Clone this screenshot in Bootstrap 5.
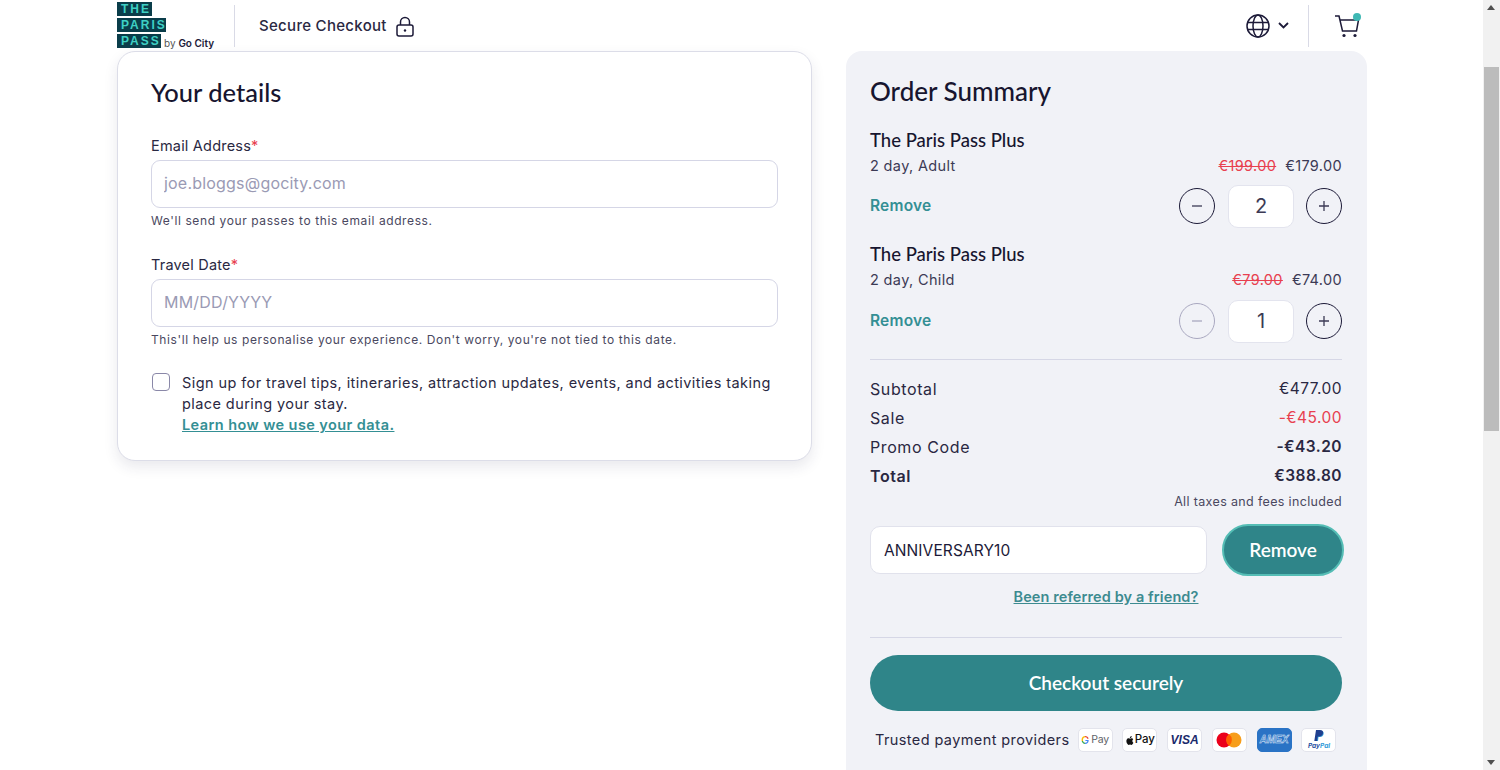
<!DOCTYPE html>
<html lang="en">
<head>
<meta charset="utf-8">
<title>Secure Checkout</title>
<link rel="stylesheet" href="https://cdn.jsdelivr.net/npm/bootstrap@5.3.0/dist/css/bootstrap.min.css">
<style>
html,body{height:770px;overflow:hidden}
body{font-family:Inter,"Liberation Sans",sans-serif;color:#1c1a38;background:#fff;font-size:15px}
.page-shell{height:770px}
.page-main{width:1483px;padding:0 116px 0 117px;overflow:hidden}
.rail{width:17px;background:#f1f1f1;height:770px;padding-top:67px;position:relative}
.rail-thumb{height:364px;width:15px;margin-left:1px;background:#bcbcbc}
.rail-arrow{position:absolute;left:4px;width:0;height:0;border-left:4.5px solid transparent;border-right:4.5px solid transparent}
.rail-up{top:5px;border-bottom:5px solid #505050}
.rail-down{bottom:5px;border-top:5px solid #505050}
.top-bar{height:51px}
.logo-box{width:98px;height:47px;margin-top:2px;position:relative;flex:none}
.logo-line{display:block;height:14px;margin-bottom:2px;line-height:14px;font-weight:700;font-size:12px;letter-spacing:2px;padding-left:4px;color:#3ed0c4;background:#0a3d4a;font-family:"Liberation Sans",sans-serif;white-space:nowrap;overflow:hidden}
.logo-the{width:35px}.logo-paris{width:49px}.logo-pass{width:44px}
.logo-by{position:absolute;left:47px;bottom:0;font-size:10px;line-height:12px;white-space:nowrap;color:#555}
.logo-by b{color:#1c1a38;font-weight:600}
.v-sep{width:1px;height:42px;background:#d9dae6;margin-top:5px}
.sep-logo{margin-left:19px}
.sep-lang{margin-left:19px}
.secure-text{font-size:15px;font-weight:500;letter-spacing:.3px;color:#2a2842;padding-top:2px}
.cart-wrap{padding-left:25px;padding-right:5px}
.content-row{gap:34px;align-items:flex-start}
.details-card{width:696px;height:410px;border:1px solid #dcdde8;border-radius:18px;box-shadow:0 6px 14px rgba(40,40,80,.1);padding:21px 33px;background:#fff}
.head-font{font-family:Lato,"Open Sans",sans-serif;font-weight:500;font-size:26px;line-height:38px;color:#17152f;margin:0}
.details-title{font-size:25.5px;margin-bottom:25px}
.summary-title{margin-bottom:18px}
.field-label{font-size:14.5px;line-height:20px;letter-spacing:.2px;color:#2a2842;margin:0 0 4px}
.req{color:#e8404f}
.field-input{height:48px;border:1px solid #d5d6e6;border-radius:9px;font-size:16px;padding:0 12px 2px;color:#1c1a38;letter-spacing:.2px}
.field-input::placeholder{color:#9a9ab4}
.field-help{font-size:12px;line-height:16px;letter-spacing:.6px;color:#4a4860;margin-top:5px}
.help-gap{margin-bottom:26px}
.check-row{gap:12px;margin-top:24px}
.form-check-input.tick{width:18px;height:18px;margin:1px 0 0 1px;border:1.5px solid #8a88a8;border-radius:4px;flex:none}
.check-text{font-size:14.5px;line-height:21px;letter-spacing:.42px;color:#2a2842}
.teal-link{color:#348f94;font-weight:600;text-decoration:underline}
.summary{width:521px;height:800px;background:#f1f2f7;border-radius:16px 16px 0 0;padding:21px 25px 0 24px}
.item-title{font-family:Lato,"Open Sans",sans-serif;font-weight:500;font-size:18.5px;line-height:24px;color:#17152f}
.item-sub{font-size:14.5px;line-height:20px;letter-spacing:.35px;color:#3c3a55;width:472px;margin-top:4px}
.old-price{color:#e8404f;text-decoration:line-through;margin-right:9px}
.remove-link{color:#348f94;font-weight:600;font-size:15.5px;letter-spacing:.2px;text-decoration:none}
.round-btn{width:36px;height:36px;border-radius:50%;border:1.6px solid #1c1a38;background:transparent;padding:0;display:flex;align-items:center;justify-content:center;color:#3c3a55}
.round-off{border-color:#a9a8c0;color:#a9a8c0}
.qty-box{width:66px;height:43px;background:#fff;border:1px solid #e3e4ee;border-radius:10px;margin:0 12px 0 13px;font-size:20px;color:#3c3a55;display:flex;align-items:center;justify-content:center}
.item-block{height:114px}
.item-block-last{height:117px}
.qty-row{height:42px;width:472px;margin-top:9px}
.qty-row-last{margin-top:10px}
.rule{height:1px;background:#d6d7e6;width:472px}
.rule-items{margin-bottom:15px}
.rule-promo{margin-top:30px;margin-bottom:17px}
.sum-wrap{width:472px}
.sum-row{font-size:16px;letter-spacing:.6px;line-height:29px;color:#2a2842}
.sum-row .amt{font-size:15.5px;letter-spacing:.45px;position:relative;top:-1px}
.strong-amt{font-weight:600}
.red-amt{color:#e8404f}
.tax-note{font-size:12.5px;letter-spacing:.35px;line-height:18px;color:#4a4860;text-align:right;width:472px;margin-top:2px}
.promo-row{margin-top:13px}
.promo-input{width:337px;height:48px;flex:none;border:1px solid #e1e2ec;border-radius:10px;font-size:15.5px;padding:0 13px;letter-spacing:.1px;color:#1c1a38;background:#fff}
.promo-btn{width:122px;height:52px;flex:none;border-radius:26px;background:#2f8589;border:2.5px solid #55bdb5;color:#fff;font-family:Lato,"Open Sans",sans-serif;font-weight:600;font-size:19px;padding:0;margin-left:15px}
.promo-btn:hover,.pay-btn:hover{background:#2f8589;color:#fff}
.refer{font-size:14.5px;line-height:20px;width:472px;text-align:center;letter-spacing:.1px;margin-top:11px}
.refer a{color:#3d8b90;font-weight:600}
.pay-btn{width:472px;height:56px;border-radius:28px;background:#2f8589;border:0;color:#fff;font-family:Lato,"Open Sans",sans-serif;font-weight:600;font-size:19px;padding:0}
.trust-row{padding-left:5px;margin-top:17px}
.trust-text{font-size:14.5px;letter-spacing:.4px;color:#2a2842;margin-right:8px;white-space:nowrap}
.pay-mark{width:35px;height:24px;border:1px solid #e3e4ec;border-radius:5px;background:#fff;margin-right:9.8px;display:flex;align-items:center;justify-content:center;flex:none;font-size:10.5px;line-height:1;overflow:hidden}
.gp{color:#5f6368;letter-spacing:-.2px;gap:2px}
.gp b{font-weight:600;font-size:11px;background:conic-gradient(#ea4335 0 25%,#4285f4 25% 50%,#34a853 50% 75%,#fbbc05 75%);-webkit-background-clip:text;background-clip:text;color:transparent}
.ap{color:#111;font-weight:500;font-size:11.5px;gap:1px}
.visa{color:#1a2a6c;font-weight:800;font-style:italic;font-size:12px;font-family:"Liberation Sans",sans-serif}
.amex{background:#2a73c5;color:#2a73c5;-webkit-text-stroke:.45px #e6f0fb;font-size:10px;font-weight:800;font-style:italic;letter-spacing:0;font-family:"Liberation Sans",sans-serif;border-color:#2a73c5}
.pp{flex-direction:column;color:#1f4fa0;font-size:6.5px;font-weight:700;font-style:italic;gap:1px}
.pp i{color:#2f9ad8}
</style>
</head>
<body>
<div class="page-shell d-flex">
  <div class="page-main">
    <header class="top-bar d-flex">
      <div class="logo-box">
        <span class="logo-line logo-the">THE</span>
        <span class="logo-line logo-paris">PARIS</span>
        <span class="logo-line logo-pass">PASS</span>
        <span class="logo-by">by <b>Go City</b></span>
      </div>
      <div class="v-sep sep-logo"></div>
      <div class="d-flex align-items-center secure-text ms-4">Secure Checkout
        <svg class="ms-2" width="20" height="22" viewBox="0 0 20 22" fill="none" stroke="#1c1a38" stroke-width="1.5"><rect x="2" y="9" width="16" height="11" rx="2"/><path d="M5.5 9V6a4.5 4.5 0 0 1 9 0v3"/><circle cx="10" cy="14.5" r="1.2" fill="#1c1a38" stroke="none"/></svg>
      </div>
      <div class="d-flex ms-auto">
        <div class="d-flex align-items-center">
          <svg width="24" height="24" viewBox="0 0 24 24" fill="none" stroke="#1c1a38" stroke-width="1.5"><circle cx="12" cy="12" r="11"/><ellipse cx="12" cy="12" rx="5" ry="11"/><path d="M1.5 8.5h21M1.5 15.5h21"/></svg>
          <svg class="ms-2" width="11" height="7" viewBox="0 0 11 7" fill="none" stroke="#1c1a38" stroke-width="1.8"><path d="M1 1l4.5 4.5L10 1"/></svg>
        </div>
        <div class="v-sep sep-lang"></div>
        <div class="d-flex align-items-center cart-wrap">
          <svg width="28" height="26" viewBox="0 0 28 26" fill="none" stroke="#1c1a38" stroke-width="1.5"><path d="M1 3h4l3.5 15h14l2-11H6"/><circle cx="10" cy="22.5" r="1.6" fill="#1c1a38" stroke="none"/><circle cx="21" cy="22.5" r="1.6" fill="#1c1a38" stroke="none"/><circle cx="23" cy="4" r="4" fill="#3fb8b4" stroke="none"/></svg>
        </div>
      </div>
    </header>

    <div class="d-flex content-row">
      <section class="details-card">
        <h2 class="head-font details-title">Your details</h2>
        <label class="field-label d-block" for="em">Email Address<span class="req">*</span></label>
        <input id="em" class="form-control field-input" type="text" placeholder="joe.bloggs@gocity.com">
        <div class="field-help help-gap">We'll send your passes to this email address.</div>
        <label class="field-label d-block" for="td">Travel Date<span class="req">*</span></label>
        <input id="td" class="form-control field-input" type="text" placeholder="MM/DD/YYYY">
        <div class="field-help">This'll help us personalise your experience. Don't worry, you're not tied to this date.</div>
        <div class="d-flex check-row">
          <input class="form-check-input tick" type="checkbox" id="cb">
          <div class="check-text">Sign up for travel tips, itineraries, attraction updates, events, and activities taking place during your stay.<br><a href="#" class="teal-link">Learn how we use your data.</a></div>
        </div>
      </section>

      <aside class="summary">
        <h2 class="head-font summary-title">Order Summary</h2>
        <div class="item-block">
          <div class="item-title">The Paris Pass Plus</div>
          <div class="d-flex justify-content-between item-sub"><span>2 day, Adult</span><span><span class="old-price">€199.00</span>€179.00</span></div>
          <div class="d-flex align-items-center justify-content-between qty-row">
            <a href="#" class="remove-link">Remove</a>
            <div class="d-flex align-items-center">
              <button class="round-btn" type="button"><svg width="12" height="12" viewBox="0 0 12 12" stroke="currentColor" stroke-width="1.3"><path d="M1 6h10"/></svg></button>
              <div class="qty-box">2</div>
              <button class="round-btn" type="button"><svg width="12" height="12" viewBox="0 0 12 12" stroke="currentColor" stroke-width="1.3"><path d="M1 6h10M6 1v10"/></svg></button>
            </div>
          </div>
        </div>
        <div class="item-block-last">
          <div class="item-title">The Paris Pass Plus</div>
          <div class="d-flex justify-content-between item-sub"><span>2 day, Child</span><span><span class="old-price">€79.00</span>€74.00</span></div>
          <div class="d-flex align-items-center justify-content-between qty-row qty-row-last">
            <a href="#" class="remove-link">Remove</a>
            <div class="d-flex align-items-center">
              <button class="round-btn round-off" type="button"><svg width="12" height="12" viewBox="0 0 12 12" stroke="currentColor" stroke-width="1.3"><path d="M1 6h10"/></svg></button>
              <div class="qty-box">1</div>
              <button class="round-btn" type="button"><svg width="12" height="12" viewBox="0 0 12 12" stroke="currentColor" stroke-width="1.3"><path d="M1 6h10M6 1v10"/></svg></button>
            </div>
          </div>
        </div>
        <div class="rule rule-items"></div>
        <div class="sum-wrap">
          <div class="d-flex justify-content-between sum-row"><span>Subtotal</span><span class="amt">€477.00</span></div>
          <div class="d-flex justify-content-between sum-row"><span>Sale</span><span class="amt red-amt">-€45.00</span></div>
          <div class="d-flex justify-content-between sum-row"><span>Promo Code</span><span class="amt strong-amt">-€43.20</span></div>
          <div class="d-flex justify-content-between sum-row fw-semibold"><span>Total</span><span class="amt">€388.80</span></div>
        </div>
        <div class="tax-note">All taxes and fees included</div>
        <div class="d-flex align-items-center promo-row">
          <input class="form-control promo-input" type="text" value="ANNIVERSARY10">
          <button class="btn promo-btn" type="button">Remove</button>
        </div>
        <div class="refer"><a href="#">Been referred by a friend?</a></div>
        <div class="rule rule-promo"></div>
        <button class="btn pay-btn" type="button">Checkout securely</button>
        <div class="d-flex align-items-center trust-row">
          <span class="trust-text">Trusted payment providers</span>
          <span class="pay-mark gp"><b>G</b>Pay</span>
          <span class="pay-mark ap"><svg width="9" height="11" viewBox="0 0 8 10" fill="#111"><path d="M6.6 5.300c0-1 .8-1.500.9-1.500-.5-.7-1.200-.8-1.500-.8-.6-.1-1.200.4-1.500.4s-.8-.4-1.300-.4C2.500 3 1.800 3.400 1.500 4 .8 5.200 1.300 7 2 8c.3.500.7 1 1.200 1 .5 0 .7-.3 1.300-.3s.8.300 1.300.3c.5 0 .9-.5 1.200-1 .4-.5.5-1 .5-1-.1 0-.9-.4-.9-1.700zM5.600 2.300c.3-.3.500-.8.400-1.300-.4 0-1 .3-1.300.6-.3.300-.5.800-.4 1.300.5 0 1-.3 1.300-.6z"/></svg>Pay</span>
          <span class="pay-mark visa">VISA</span>
          <span class="pay-mark"><svg width="26" height="16" viewBox="0 0 26 16"><circle cx="8" cy="8" r="7.500" fill="#eb001b"/><circle cx="18" cy="8" r="7.500" fill="#f79e1b"/><path d="M13 2.100a7.500 7.500 0 0 1 0 11.800 7.500 7.500 0 0 1 0-11.800z" fill="#ff5f00"/></svg></span>
          <span class="pay-mark amex">AMEX</span>
          <span class="pay-mark pp"><svg width="10" height="12" viewBox="0 0 10 12"><path d="M3 1h4c2 0 3 1.200 2.600 3C9.200 6 7.800 7 6 7H4.500L4 11H1.500z" fill="#2f9ad8"/><path d="M2 0h4c2.500 0 3.500 1.300 3 3.300C8.500 5.500 7 6.500 5 6.500H3.700L3 11H.3z" fill="#1f3f8f"/></svg><span>Pay<i>Pal</i></span></span>
        </div>
      </aside>
    </div>
  </div>
  <div class="rail">
    <span class="rail-arrow rail-up"></span>
    <div class="rail-thumb"></div>
    <span class="rail-arrow rail-down"></span>
  </div>
</div>
</body>
</html>
